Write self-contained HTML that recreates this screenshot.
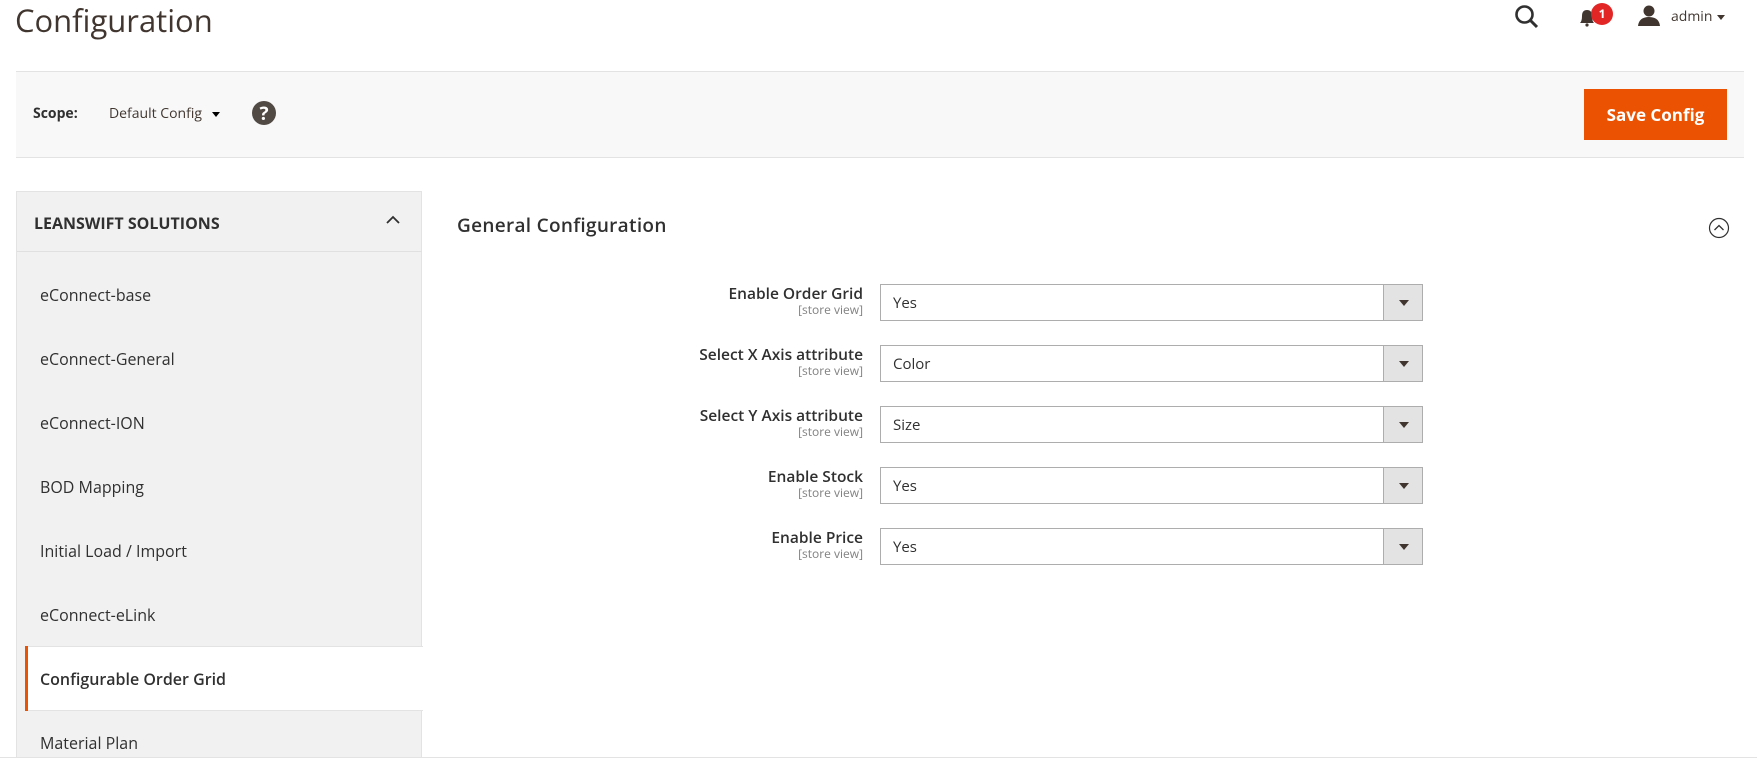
<!DOCTYPE html>
<html style="overflow:hidden"><head><style>
html,body{margin:0;width:1757px;height:772px;overflow:hidden}
body{background:#fff;font-family:"Open Sans","Liberation Sans",sans-serif;color:#303030;position:relative}
.a{position:absolute}
.side{left:16px;top:191px;width:406px;height:566px;background:#f1f1f1;border:1px solid #e3e3e3;border-bottom:0;box-sizing:border-box}
.item{position:absolute;left:40px;font-size:16px;color:#303030}
.lab{position:absolute;right:894px;text-align:right;font-size:15.5px;font-weight:600;color:#303030;line-height:18px}
.lab small{display:block;font-size:12px;font-weight:400;color:#808080;line-height:15px}
.sel{position:absolute;left:880px;width:541px;height:35px;border:1px solid #adadad;background:#fff;font-size:15px}
.sel span{position:absolute;left:12px;top:8px}
.sel i{position:absolute;right:0;top:0;width:38px;height:35px;background:#e3e3e3;border-left:1px solid #adadad}
.sel i:after{content:"";position:absolute;left:15px;top:15px;border:5px solid transparent;border-top:6px solid #41362f;border-bottom:0}
</style></head><body>
<div class="a" style="left:15px;top:0px;font-size:31px;color:#41362f">Configuration</div>
<svg class="a" style="left:1514px;top:4px" width="26" height="26" viewBox="0 0 26 26"><circle cx="10.5" cy="10.5" r="8" fill="none" stroke="#303030" stroke-width="2.6"/><line x1="16.5" y1="16.5" x2="23" y2="23" stroke="#303030" stroke-width="3"/></svg>
<svg class="a" style="left:1577px;top:7px" width="20" height="20" viewBox="0 0 20 20"><path d="M3 16 Q5 14 5 9 Q5 3 10 3 Q15 3 15 9 Q15 14 17 16Z" fill="#41362f"/><circle cx="10" cy="18" r="1.6" fill="#41362f"/></svg>
<div class="a" style="left:1591px;top:3px;width:22px;height:22px;border-radius:50%;background:#e22626;color:#fff;font-size:12px;font-weight:700;text-align:center;line-height:22px">1</div>
<svg class="a" style="left:1637px;top:4px" width="24" height="22" viewBox="0 0 24 22"><circle cx="12" cy="7" r="5.5" fill="#41362f"/><path d="M1 22 Q2 13 12 13 Q22 13 23 22Z" fill="#41362f"/></svg>
<div class="a" style="left:1671px;top:7px;font-size:14px;color:#41362f">admin</div>
<div class="a" style="left:1717px;top:15px;border:4px solid transparent;border-top:5px solid #41362f"></div>

<div class="a" style="left:16px;top:71px;width:1728px;height:85px;background:#f8f8f8;border-top:1px solid #e3e3e3;border-bottom:1px solid #e3e3e3"></div>
<div class="a" style="left:33px;top:104px;font-size:14px;font-weight:700;color:#303030">Scope:</div>
<div class="a" style="left:109px;top:104px;font-size:14px;color:#41362f">Default Config</div>
<div class="a" style="left:212px;top:112px;border:4px solid transparent;border-top:5px solid #000"></div>
<div class="a" style="left:252px;top:101px;width:24px;height:24px;border-radius:50%;background:#514943;color:#fff;font-size:19px;font-weight:700;text-align:center;line-height:24px">?</div>
<div class="a" style="left:1584px;top:89px;width:143px;height:51px;background:#eb5202;color:#fff;font-size:17px;font-weight:700;text-align:center;line-height:51px">Save Config</div>

<div class="a side"></div>
<div class="a" style="left:17px;top:251px;width:405px;height:1px;background:#e0e0e0"></div>
<div class="a" style="left:34px;top:212px;font-size:16px;font-weight:700;color:#303030">LEANSWIFT SOLUTIONS</div>
<svg class="a" style="left:385px;top:215px" width="16" height="10" viewBox="0 0 16 10"><path d="M2 8 L8 2 L14 8" fill="none" stroke="#303030" stroke-width="1.8"/></svg>
<div class="item" style="top:284px">eConnect-base</div>
<div class="item" style="top:348px">eConnect-General</div>
<div class="item" style="top:412px">eConnect-ION</div>
<div class="item" style="top:476px">BOD Mapping</div>
<div class="item" style="top:540px">Initial Load / Import</div>
<div class="item" style="top:604px">eConnect-eLink</div>
<div class="a" style="left:25px;top:646px;width:398px;height:65px;background:#fff;border-top:1px solid #e3e3e3;border-bottom:1px solid #e3e3e3;box-sizing:border-box"></div>
<div class="a" style="left:25px;top:646px;width:3px;height:65px;background:#eb5202"></div>
<div class="item" style="top:668px;font-weight:600">Configurable Order Grid</div>
<div class="item" style="top:732px">Material Plan</div>
<div class="a" style="left:0;top:757px;width:1757px;height:1px;background:#e3e3e3"></div>

<div class="a" style="left:457px;top:212px;font-size:19px;font-weight:600;color:#303030;letter-spacing:.3px">General Configuration</div>
<svg class="a" style="left:1708px;top:217px" width="22" height="22" viewBox="0 0 22 22"><circle cx="11" cy="11" r="9.5" fill="none" stroke="#303030" stroke-width="1.2"/><path d="M6.5 13 L11 8.5 L15.5 13" fill="none" stroke="#303030" stroke-width="1.3"/></svg>

<div class="lab" style="top:284px">Enable Order Grid<small>[store view]</small></div>
<div class="sel" style="top:284px"><span>Yes</span><i></i></div>
<div class="lab" style="top:345px">Select X Axis attribute<small>[store view]</small></div>
<div class="sel" style="top:345px"><span>Color</span><i></i></div>
<div class="lab" style="top:406px">Select Y Axis attribute<small>[store view]</small></div>
<div class="sel" style="top:406px"><span>Size</span><i></i></div>
<div class="lab" style="top:467px">Enable Stock<small>[store view]</small></div>
<div class="sel" style="top:467px"><span>Yes</span><i></i></div>
<div class="lab" style="top:528px">Enable Price<small>[store view]</small></div>
<div class="sel" style="top:528px"><span>Yes</span><i></i></div>
</body></html>
